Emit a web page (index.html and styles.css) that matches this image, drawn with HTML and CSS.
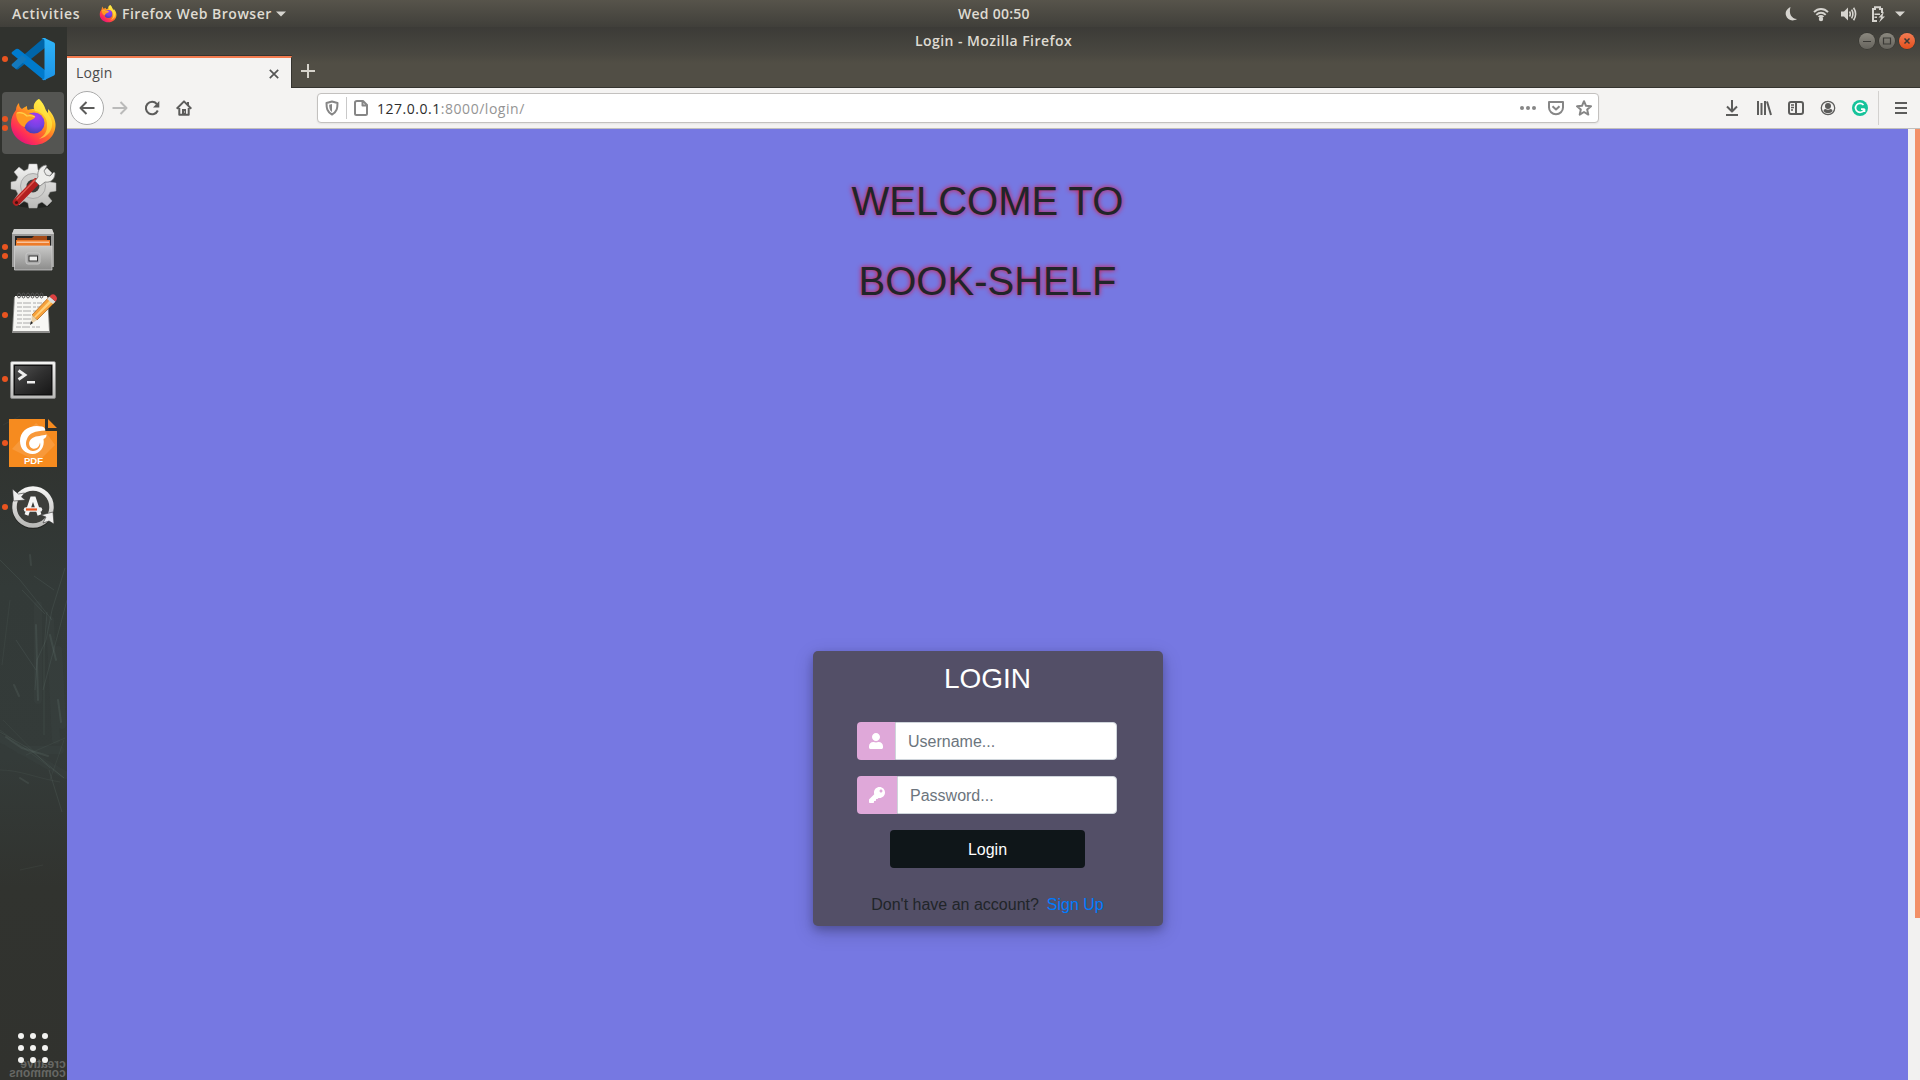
FILE: index.html
```html
<!DOCTYPE html>
<html lang="en">
<head>
<meta charset="utf-8">
<title>Login</title>
<link rel="stylesheet" href="styles.css">
</head>
<body>
<svg class="defs" width="0" height="0">
  <defs>
    <linearGradient id="fxBody" x1="0.85" y1="0.1" x2="0.2" y2="0.95"><stop offset="0" stop-color="#fff44f"/><stop offset=".3" stop-color="#ffb51f"/><stop offset=".55" stop-color="#ff6a2a"/><stop offset=".8" stop-color="#ff2f56"/><stop offset="1" stop-color="#e2127e"/></linearGradient>
    <radialGradient id="fxGlobe" cx=".6" cy=".2" r=".8"><stop offset="0" stop-color="#a63cf2"/><stop offset=".6" stop-color="#7542e5"/><stop offset="1" stop-color="#4a3fb5"/></radialGradient>
    <linearGradient id="silver" x1="0" y1="0" x2="0" y2="1"><stop offset="0" stop-color="#f4f4f3"/><stop offset="1" stop-color="#b9b9b7"/></linearGradient>
    <linearGradient id="cabinet" x1="0" y1="0" x2="0" y2="1"><stop offset="0" stop-color="#c9c9c8"/><stop offset="1" stop-color="#8c8c8b"/></linearGradient>
    <linearGradient id="screen" x1="0" y1="0" x2="1" y2="1"><stop offset="0" stop-color="#515151"/><stop offset=".5" stop-color="#303030"/><stop offset="1" stop-color="#171717"/></linearGradient>
    <linearGradient id="codeR" x1="0" y1="0" x2="0" y2="1"><stop offset="0" stop-color="#2fb4f8"/><stop offset="1" stop-color="#1c94e8"/></linearGradient>
    <symbol id="firefox" viewBox="0 0 48 48">
      <path fill="url(#fxBody)" d="M30 0c3 3 5 6 6 9 1 3 2 4 3 5V10c4 4 7 9 7.500 15C47 37 37 46 25 46S2 37 2 25c0-6 2-10 5-14 0-3 1-5 3-7 0 3 1 5 3 6 1-1 3-2 5-3 0 2 0 3 1 4 2-1 4-1 6-1-1-4 1-8 5-10z"/>
      <path fill="#fff04a" opacity=".6" d="M30 0c-5 3-6 7-4 12 7 1 13 7 12 15 0 6-3 10-8 13 9-2 14-9 13-17-1-5-4-8-7-13-1-4-3-7-6-10z"/>
      <circle cx="25" cy="24" r="10.500" fill="url(#fxGlobe)"/>
      <path fill="#ff9a22" d="M7 14c4-2 8-2 11 1 3-1 6 1 8 2 0 3-4 4-6 5-2 2-4 3-4 6-5-1-9-7-9-14z"/>
      <path fill="none" stroke="#ffd04a" stroke-width="1.200" d="M8 14c4-1 7 0 10 3 3-1 6 0 8 1"/>
    </symbol>
  </defs>
</svg>

<header class="topbar">
  <div class="topbar-left">
    <span class="activities">Activities</span>
    <svg class="app-logo" width="18" height="18"><use href="#firefox"/></svg>
    <span class="app-name">Firefox Web Browser</span>
    <svg class="caret" width="10" height="6" viewBox="0 0 10 6"><path d="M0 .5h10L5 5.500z"/></svg>
  </div>
  <span class="clock">Wed 00:50</span>
  <div class="tray">
    <svg width="16" height="16" viewBox="0 0 16 16"><path d="M6.500 1C2.500 3 1 6 2 9.500c1.200 4.500 6.500 6.500 11 3.500C7.500 12.500 4.500 8 6.500 1z"/></svg>
    <svg width="16" height="16" viewBox="0 0 16 16"><g fill="none" stroke="#d6d4cf" stroke-width="1.900"><path d="M1 6.200C5 2 11 2 15 6.200"/><path d="M3.300 8.800C6 6 10 6 12.700 8.800"/></g><path d="M4.800 10.200c2-1.600 4.400-1.600 6.400 0l-1.500 1.200H6.300z"/><circle cx="8" cy="13" r="2.200"/></svg>
    <svg class="volume" width="17" height="16" viewBox="0 0 17 16"><path d="M1 5.500h3l4-4v13l-4-4H1z"/><g fill="none" stroke="#d6d4cf" stroke-width="1.600"><path d="M9.500 5.500q1.600 2.500 0 5M11.600 3.600q2.600 4.400 0 8.800M13.600 1.800q4 6.200 0 12.400"/></g></svg>
    <svg width="16" height="18" viewBox="0 0 16 18"><path fill="none" stroke="#d6d4cf" stroke-width="2" d="M7 16H3V4h2V2.200h5V4h2v4"/><path d="M4.500 8.500H10v1.500H4.500zM4.500 11.500H7V13H4.500zM14 6.500l-5.500 6h2.700L9 17.500l6-6h-2.600z"/></svg>
    <svg class="caret" width="10" height="6" viewBox="0 0 10 6"><path d="M0 .5h10L5 5.500z"/></svg>
  </div>
</header>

<div class="desktop">
  <nav class="dock">
    <svg class="wallpaper" width="67" height="1053" viewBox="0 27 67 1053" fill="none" stroke="#8ba19b">
      <g stroke-width="1" opacity=".12"><path d="M0 560L20 580 52 620M34 576L54 590M65 568L52 610 46 640 37 660 35 690M47 612L44 650 44 735M67 600L55 645 43 690M16 640L36 670M0 732L28 748 64 778M49 770L62 812M22 590L45 614"/></g>
      <g stroke-width="2" opacity=".13" stroke-linecap="round"><path d="M50 635L56 660M36 625L38 700M58 700L61 722M6 737L22 748 48 756M14 685L19 696M20 778L28 783M30 555L31 565"/></g>
      <g stroke-width="8" opacity=".04" stroke-linecap="round"><path d="M38 605V700M58 650L62 725M0 738L65 775M50 620L56 740M20 750H60"/></g>
      <g stroke-width="1" opacity=".08"><path d="M0 730L64 778M0 770C20 770 36 778 60 782M3 720L50 768M20 870L43 865M5 110L30 102M3 425L20 416M10 600L2 665M64 740L50 780M26 755L65 738"/></g>
    </svg>
    <div class="launcher"><i class="pips"><b></b></i>
      <svg width="48" height="48" viewBox="0 0 48 48"><path fill="#0065a9" d="M3 30l4 4q1 1 2.500 0L37 12V3q-2-.5-3.500 1z"/><path fill="#007acc" d="M3 17l4-3q1-.7 2.500 0L37 36v9q-2 .5-3.500-1L3 19q-1-1 0-2z"/><path fill="#1479bd" d="M7 34l11-10-5-4L3 29q-1 1 0 2z"/><path fill="url(#codeR)" d="M35.500 3L45 7.500q1 .5 1 2v29q0 1.500-1 2L35.500 45q-2 .5-3-1 3 1 3-2V6q0-3-3-2 1-1.500 3-1z"/></svg>
    </div>
    <div class="launcher active"><i class="pips"><b></b><b></b></i><svg width="48" height="48"><use href="#firefox"/></svg></div>
    <div class="launcher">
      <svg width="48" height="48" viewBox="0 1 48 48"><ellipse cx="25" cy="43" rx="16" ry="3" fill="#20221f"/><path fill="url(#silver)" stroke="#aaa" stroke-width=".5" d="M20 2h8l1 6 4 2 5-4 5 5-4 5 2 4 6 1v8l-6 1-2 4 4 5-5 5-5-4-4 2-1 4h-8l-1-5-4-2-5 4-5-5 4-6-2-4-5-1v-7l5-1 2-4-4-5 5-5 5 4 4-2z"/><circle cx="24" cy="24" r="12.500" fill="#cfcfcd" stroke="#aaa"/><circle cx="24" cy="24" r="6.500" fill="#3a3b38"/><path stroke="#b32020" stroke-width="7.500" stroke-linecap="round" d="M7.500 40L27 20"/><path stroke="#df5a50" stroke-width="1.500" stroke-linecap="round" d="M8 37L26 18"/><path fill="#ededeb" stroke="#777" stroke-width=".8" d="M26 19l3-4c-1-6 2-11 8-12l1 1-3 5 2 4 4 1 4-4 1 1c0 6-4 10-10 9l-5 4z"/><circle cx="7.500" cy="40.500" r="1.600" fill="#461010"/></svg>
    </div>
    <div class="launcher"><i class="pips"><b></b><b></b></i>
      <svg width="48" height="48" viewBox="0 1 48 48"><path fill="#9b9b9a" d="M5 3h38l2 5v33H3V8z"/><path fill="#d2d2d1" d="M5 3h38l2 5H3z"/><path fill="#252525" d="M6 10h36v12H6z"/><path fill="#a44a17" d="M8 12h15l2-2h13v10H8z"/><path fill="#ed7b29" d="M7 14h34v7H7z"/><path fill="#f8c29b" d="M8 15.500h32V17H8z"/><path fill="url(#cabinet)" stroke="#d4d4d4" stroke-width=".7" d="M5.500 20H43v24H5.500z"/><rect x="17" y="27" width="14" height="11" rx="2" fill="#aaa" stroke="#c8c8c8"/><rect x="20" y="30" width="8.500" height="5" fill="#f0f0ef" stroke="#333"/></svg>
    </div>
    <div class="launcher"><i class="pips"><b></b></i>
      <svg width="48" height="48" viewBox="0 0 48 48"><path fill="#8f8f8d" d="M5 6h34l2 36H3z"/><path fill="#f7f7f4" d="M6 5h32l2 35H4z"/><g fill="none" stroke="#555" stroke-width="1"><ellipse cx="10" cy="4.500" rx="1.500" ry="2.500"/><ellipse cx="14.500" cy="4.500" rx="1.500" ry="2.500"/><ellipse cx="19" cy="4.500" rx="1.500" ry="2.500"/><ellipse cx="23.500" cy="4.500" rx="1.500" ry="2.500"/><ellipse cx="28" cy="4.500" rx="1.500" ry="2.500"/><ellipse cx="32.500" cy="4.500" rx="1.500" ry="2.500"/></g><path stroke="#aaa" stroke-width="1" stroke-dasharray="5 1 8 2 3 1" d="M8 12h27M8 16h24M8 20h20M8 24h20M8 28h17M8 32h15M7 36h24"/><path fill="#f7a13b" stroke="#a35e17" stroke-width=".7" d="M40 6l6 5-18 18-5-5z"/><path fill="#ffd27e" d="M41 9l2 2-17 16-1-1z"/><path fill="#e8cfa8" d="M23 24l5 5-6 4z"/><path fill="#222" d="M22 30l2 2-3 2z"/><path fill="#ddd" d="M38 8l2.500-2.500 6 5L44 13z"/><path fill="#dd4141" d="M40.500 5.500q3-4 6-1t0 6z"/></svg>
    </div>
    <div class="launcher"><i class="pips"><b></b></i>
      <svg width="48" height="48" viewBox="0 -.5 48 48"><rect x="1.500" y="6" width="45" height="37" rx="1.500" fill="url(#silver)" stroke="#888" stroke-width=".7"/><rect x="4.500" y="9" width="39" height="31" fill="#111"/><rect x="6" y="10.500" width="36" height="28" fill="url(#screen)"/><path fill="none" stroke="#eee" stroke-width="2.800" d="M9.500 15l6.500 4.500-6.500 4.500"/><path fill="#eee" d="M18 25.500h8V28h-8z"/></svg>
    </div>
    <div class="launcher"><i class="pips"><b></b></i>
      <svg width="48" height="48" viewBox="0 0 48 48"><path fill="#f68b1f" d="M0 0h36v12h12v36H0zM39 0l9 9h-9z"/><path fill="#f9a755" d="M27 4l9 8 10 14-17 17L3 30l10-11z" opacity=".5"/><path fill="#fff" fill-rule="evenodd" d="M33 7.500C20 5 11 12 11 22c0 8 5.500 13 12.500 13C31 35 36 28 34.500 20c3-1.500 3-3 3-4.500-4 1.500-10 1-14 3.500-5 3-4 9 0 10.500 4 1 7-2 7.500-6 1.500 5-3 9-7.500 8.500-6-.5-8-7-5.500-12C20 14 26 12 36.500 11.500 36 9 35 8 33 7.500z"/><text x="24.500" y="44.500" text-anchor="middle" class="pdf-text">PDF</text></svg>
    </div>
    <div class="launcher"><i class="pips"><b></b></i>
      <svg width="48" height="48" viewBox="0 0 48 48"><circle cx="24" cy="25" r="21" fill="#252624"/><circle cx="24" cy="24" r="18.500" fill="#3d3e3b" stroke="url(#silver)" stroke-width="4.500"/><path fill="#eee" stroke="#333" stroke-width=".6" d="M3.500 6l1 12 12-1-4-3 3-4-6 1zM45 41l-1-12-12 3 5 2-3 6 6-2z"/><path fill="none" stroke="#f4f4f4" stroke-width="4" d="M17.500 32L23 15.500h2L30.500 32"/><path stroke="#eee" stroke-width="4.500" stroke-linecap="round" d="M17 26.500h14"/><path stroke="#e95420" stroke-width="2.200" d="M17 26.500h11"/></svg>
    </div>
    <span class="mirrored">creative<br>commons</span>
    <div class="apps"><i></i><i></i><i></i><i></i><i></i><i></i><i></i><i></i><i></i></div>
  </nav>

  <main class="window">
    <div class="titlebar">
      <span class="window-title">Login - Mozilla Firefox</span>
      <div class="controls">
        <svg width="16" height="16" viewBox="0 0 16 16"><path d="M4 8.500h8"/></svg>
        <svg width="16" height="16" viewBox="0 0 16 16"><path d="M4.500 5h7v6h-7z"/></svg>
        <svg class="close" width="16" height="16" viewBox="0 0 16 16"><path d="M5.500 5.500l5 5M10.500 5.500l-5 5"/></svg>
      </div>
    </div>
    <div class="tabs">
      <div class="tab"><span>Login</span><svg width="10" height="10" viewBox="0 0 10 10"><path d="M.8.8l8.400 8.400M9.200.8L.8 9.200"/></svg></div>
      <svg class="new-tab" width="14" height="14" viewBox="0 0 14 14"><path d="M7 0v14M0 7h14"/></svg>
    </div>
    <div class="toolbar">
      <div class="nav-buttons">
        <span class="nav-btn back"><svg width="16" height="16" viewBox="0 0 16 16"><path d="M15.500 8H1.500M7.500 2L1.500 8l6 6"/></svg></span>
        <span class="nav-btn dim"><svg width="16" height="16" viewBox="0 0 16 16"><path d="M.5 8h14M8.500 2l6 6-6 6"/></svg></span>
        <span class="nav-btn"><svg width="16" height="16" viewBox="0 0 16 16"><path d="M13.800 10.500A6.200 6.200 0 1 1 12.800 4"/><path class="solid" d="M15.300 1v6.500H9z"/></svg></span>
        <span class="nav-btn"><svg width="16" height="16" viewBox="0 0 16 16"><path d="M.7 8.700L8 1.400l7.300 7.300M3.300 8v6.800h9.400V8"/><path class="solid" d="M6 9h4v6H6zM11 2h2v4h-2z"/><path class="knob" d="M8.500 11.500v1"/></svg></span>
      </div>
      <div class="urlbar">
        <svg width="14" height="16" viewBox="0 0 14 16"><path d="M7 1.500L12.500 3c0 5-.5 9-5.500 11.500C2 12 1.500 8 1.500 3z"/><path class="solid" d="M7 4v8C4.500 10.500 4.200 8 4.200 4.700z"/></svg>
        <i class="url-divider"></i>
        <svg width="14" height="16" viewBox="0 0 14 16"><path d="M3 1h6l4 4v8.500q0 1.500-1.500 1.500h-9Q1 15 1 13.500V2.500Q1 1 3 1zM8.500 1v4.500H13"/></svg>
        <span class="url"><b>127.0.0.1</b><span>:8000/login/</span></span>
        <div class="url-actions">
          <svg width="16" height="16" viewBox="0 0 16 16"><g class="solid"><circle cx="2" cy="8" r="2"/><circle cx="8" cy="8" r="2"/><circle cx="14" cy="8" r="2"/></g></svg>
          <svg width="16" height="16" viewBox="0 0 16 16"><path d="M1 2h14v5.500a7 6.700 0 0 1-14 0zM4.500 6.200L8 9.500l3.500-3.300"/></svg>
          <svg width="16" height="16" viewBox="0 0 16 16"><path d="M8 1.200l2 4.600 5 .5-3.800 3.300 1.100 5L8 12l-4.300 2.600 1.100-5L1 6.300l5-.5z"/></svg>
        </div>
      </div>
      <div class="tools">
        <span><svg width="16" height="16" viewBox="0 0 16 16"><path d="M8 0v11M3 6.500l5 5 5-5M2 15h12"/></svg></span>
        <span><svg width="16" height="16" viewBox="0 0 16 16"><path d="M2 1v14M5.500 3v12M9 1v14M11 1.500L15 15"/></svg></span>
        <span><svg width="16" height="16" viewBox="0 0 16 16"><rect x="1" y="2" width="14" height="12" rx="2"/><path d="M8 2v12"/><path class="thin" d="M3 5h3M3 7.500h3M3 10h2"/></svg></span>
        <span><svg width="16" height="16" viewBox="0 0 16 16"><circle class="thin" cx="8" cy="8" r="6.700"/><circle class="solid" cx="8" cy="6" r="3"/><path class="solid" d="M3.500 11q0-2 2-2 2.500 1.500 5 0 2 0 2 2c-2 3-7 3-9 0z"/></svg></span>
        <span><svg width="16" height="16" viewBox="0 0 16 16"><circle class="green" cx="8" cy="8" r="8"/><path class="white" d="M11.500 5A4.500 4.500 0 1 0 12.300 9.200H9M12.500 9v3"/></svg></span>
      </div>
      <svg class="menu" width="14" height="14" viewBox="0 0 14 14"><path d="M1 2h12M1 7h12M1 12h12"/></svg>
    </div>
    <div class="viewport">
      <section class="page">
        <h1>WELCOME TO</h1>
        <h1>BOOK-SHELF</h1>
        <form class="card">
          <h3>LOGIN</h3>
          <div class="field">
            <span class="prepend"><svg width="14" height="16" viewBox="0 0 448 512"><path d="M224 256c70.700 0 128-57.300 128-128S294.700 0 224 0 96 57.300 96 128s57.300 128 128 128zm89.600 32h-16.700c-22.200 10.200-46.900 16-72.900 16s-50.600-5.800-72.900-16h-16.700C60.200 288 0 348.200 0 422.400V464c0 26.500 21.500 48 48 48h352c26.500 0 48-21.500 48-48v-41.600c0-74.200-60.200-134.400-134.400-134.400z"/></svg></span>
            <input type="text" placeholder="Username...">
          </div>
          <div class="field">
            <span class="prepend"><svg width="16" height="16" viewBox="0 0 512 512"><path d="M512 176.001C512 273.203 433.202 352 336 352c-11.220 0-22.190-1.062-32.827-3.069l-24.012 27.014A23.999 23.999 0 0 1 261.223 384H224v40c0 13.255-10.745 24-24 24h-40v40c0 13.255-10.745 24-24 24H24c-13.255 0-24-10.745-24-24v-78.059c0-6.365 2.529-12.470 7.029-16.971l161.802-161.802C163.108 213.814 160 195.271 160 176 160 78.798 238.797.001 335.999 0 433.488-.001 512 78.511 512 176.001zM336 128c0 26.510 21.490 48 48 48s48-21.490 48-48-21.490-48-48-48-48 21.490-48 48z"/></svg></span>
            <input type="password" placeholder="Password...">
          </div>
          <button type="button">Login</button>
          <p>Don't have an account? <a href="#">Sign Up</a></p>
        </form>
      </section>
      <div class="scrollbar"><i></i></div>
    </div>
  </main>
</div>
</body>
</html>
```
FILE: styles.css
```css
* { box-sizing: border-box; }
html, body { height: 100%; }
body { margin: 0; overflow: hidden; background: #32332f; font-family: "Open Sans", "Noto Sans", sans-serif; font-size: 14px; }
svg { display: block; flex: none; }
.defs { position: absolute; }

.topbar { height: 27px; padding: 0 15px 0 12px; display: grid; grid-template-columns: 946px auto 1fr; align-items: center; background: linear-gradient(#57544b, #403f3a); color: #dfdbd2; font-weight: 600; line-height: 26px; white-space: nowrap; }
.topbar-left, .tray { display: flex; align-items: center; height: 26px; }
.activities { width: 68px; letter-spacing: .7px; }
.app-logo { margin: 0 5px 0 19px; }
.app-name { width: 150px; letter-spacing: .5px; }
.clock { letter-spacing: .25px; line-height: 25px; }
.topbar-left .caret { margin-left: 4px; }
.topbar .caret, .tray svg { fill: #d6d4cf; }
.tray { justify-content: flex-end; gap: 13px; }
.tray .caret { margin-left: -4px; }
.tray .volume { margin-left: -2px; }

.desktop { display: flex; height: 1053px; }
.dock { position: relative; width: 67px; display: flex; flex-direction: column; gap: 2px; padding: 1px 3px 0 2px; background: linear-gradient(#30322e 0, #30322e 400px, #333a38 560px, #343b39 730px, #31332f 860px, #31322e 100%); }
.wallpaper { position: absolute; left: 0; top: 0; }
.launcher { position: relative; width: 62px; height: 62px; display: flex; align-items: center; justify-content: center; border-radius: 4px; }
.launcher.active { background: #545552; }
.pips { position: absolute; left: 0; top: 0; height: 100%; display: flex; flex-direction: column; justify-content: center; gap: 3px; }
.pips b { width: 6px; height: 6px; border-radius: 50%; background: #e95420; }
.pdf-text { font: bold 9.500px "Liberation Sans", sans-serif; fill: #fff; }
.mirrored { position: absolute; right: 1px; bottom: 3px; transform: scaleX(-1); font: bold 12px/8.500px "Liberation Sans", sans-serif; color: #666764; text-align: left; }
.apps { position: relative; margin: auto auto 17px; display: grid; grid-template-columns: repeat(3, 6px); gap: 6px; }
.apps i { width: 6px; height: 6px; border-radius: 50%; background: #f3f3f1; }

.window { flex: 1; display: flex; flex-direction: column; min-width: 0; }
.titlebar { height: 28px; display: grid; grid-template-columns: 1fr auto 1fr; align-items: center; background: linear-gradient(#3c3b37, #4a4841); padding: 0 5px; color: #dfdbd2; font-weight: 600; line-height: 28px; letter-spacing: .45px; }
.window-title { grid-column: 2; }
.controls { display: flex; justify-content: flex-end; gap: 4px; }
.controls svg { border-radius: 50%; background: linear-gradient(#8b887f, #66645d); fill: none; stroke: #3b3a36; stroke-width: 1.200; box-shadow: 0 0 0 .5px #33322e; }
.controls .close { background: linear-gradient(#f37c54, #e44f1c); stroke-width: 1.500; }
.tabs { height: 33px; display: flex; background: linear-gradient(#4a4841, #514e45 8px); border-bottom: 1px solid #35342f; }
.tab { width: 225px; height: 33px; display: flex; align-items: center; justify-content: space-between; padding: 0 12px 3px 9px; background: #f4f3f2; border-top: 2px solid #f37b4f; border-right: 1px solid #35342f; box-shadow: 0 -1px #35342f; color: #4c4c4c; margin-top: 1px; letter-spacing: .2px; }
.tab svg { margin-top: 3px; stroke: #555; stroke-width: 1.700; fill: none; }
.new-tab { margin: 9px 0 0 9px; stroke: #d6d3cb; stroke-width: 2; }
.toolbar { height: 41px; display: flex; align-items: center; padding: 0 3px; background: #f4f3f2; border-bottom: 1px solid #c1bfbd; }
.toolbar svg { fill: none; stroke: #5c5c5b; stroke-width: 2; stroke-linejoin: round; }
.toolbar .solid { fill: #5c5c5b; stroke: none; }
.toolbar .thin { stroke-width: 1.300; }
.toolbar .knob { stroke: #f4f3f2; stroke-width: 1; }
.toolbar .green { fill: #15c39a; stroke: none; }
.toolbar .white { stroke: #fff; stroke-width: 1.700; }
.nav-buttons { display: flex; align-items: center; }
.nav-btn { width: 32px; height: 34px; display: flex; align-items: center; justify-content: center; }
.nav-btn.back { width: 34px; border: 1px solid #aaa; border-radius: 50%; background: #fff; }
.toolbar .dim svg { stroke: #bababa; }
.urlbar { width: 1282px; height: 30px; margin-left: 117px; padding: 0 6px 0 7px; display: flex; align-items: center; background: #fff; border: 1px solid #c3c1bf; border-radius: 4px; box-shadow: 0 1px 2px #0001; }
.urlbar svg { stroke: #868686; }
.toolbar .urlbar .solid { fill: #868686; }
.url-divider { width: 1px; height: 22px; margin: 0 7px; background: #c9c9c9; }
.url { margin-left: 9px; color: #949494; letter-spacing: .53px; }
.url b { font-weight: 400; color: #2d2d2d; }
.url-actions { display: flex; gap: 12px; margin-left: auto; }
.tools { display: flex; margin-left: 117px; }
.tools span { width: 32px; display: flex; justify-content: center; }
.menu { box-sizing: content-box; padding: 10px 13px 10px 15px; margin-left: auto; margin-right: -4px; border-left: 1px solid #d3d1cf; }

.viewport { flex: 1; display: flex; }
.page { flex: 1; padding-top: 48px; background: #7678e2; font-family: "Liberation Sans", Arial, sans-serif; font-size: 16px; line-height: 24px; color: #212529; text-align: center; }
.page h1 { margin: 0 0 32px; font-size: 40px; font-weight: 400; line-height: 48px; text-shadow: 0 0 5px #e00f3c; }
.card { width: 350px; height: 275px; margin: 346px auto 0; padding: 11px 46px 0 44px; border-radius: 5px; background: #534f67; box-shadow: 0 4px 8px rgba(0,0,0,.2), 0 6px 20px rgba(0,0,0,.19); }
.card h3 { margin: 0 0 26px -2px; padding-left: 4px; font-size: 28px; font-weight: 400; line-height: 34px; color: #fff; }
.field { display: flex; height: 38px; margin-bottom: 16px; }
.prepend { display: flex; align-items: center; padding: 0 12px; background: #dfa8d9; border-radius: 4px 0 0 4px; }
.prepend svg { fill: #fff; }
.field input { flex: 1; min-width: 0; padding: 8px 12px 6px 12.500px; border: 1px solid #ced4da; border-radius: 0 4px 4px 0; background: #fff; font: inherit; }
.field input::placeholder { color: #6c757d; opacity: 1; }
.card button { display: block; width: 195px; height: 38px; margin: 0 0 0 33px; padding: 1px 0 0 1px; border: 0; border-radius: 4px; background: #0f1619; color: #fff; font: inherit; }
.card p { margin: 25px -2px 0 0; white-space: nowrap; }
.card a { margin-left: 3.500px; color: #007bff; text-decoration: none; }
.scrollbar { width: 12px; display: flex; justify-content: flex-end; background: #f2f1f0; }
.scrollbar i { width: 5px; height: 789px; background: #f39067; }
```
